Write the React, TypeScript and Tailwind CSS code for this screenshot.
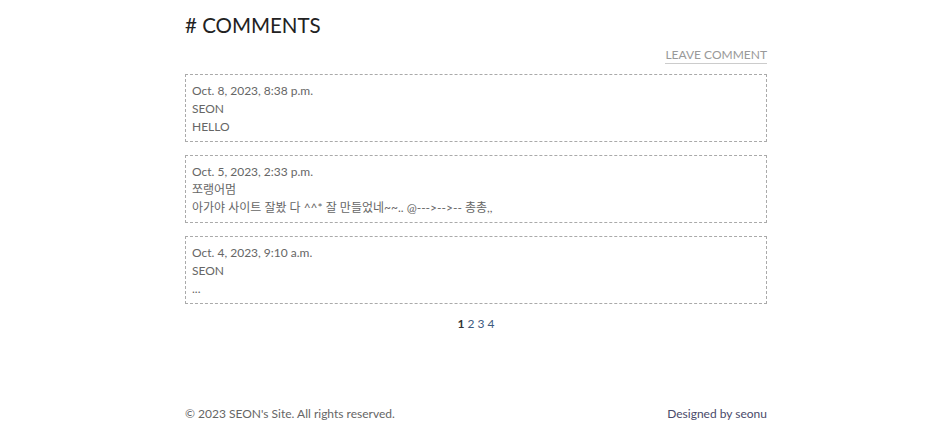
const comments = [
  { date: "Oct. 8, 2023, 8:38 p.m.", author: "SEON", body: "HELLO" },
  {
    date: "Oct. 5, 2023, 2:33 p.m.",
    author: "쪼랭어멈",
    body: "아가야 사이트 잘봤 다 ^^* 잘 만들었네~~.. @--->-->-- 총총,,",
  },
  { date: "Oct. 4, 2023, 9:10 a.m.", author: "SEON", body: "..." },
]

const App = () => {
  return (
    <div
      className="min-h-[431px] bg-white text-[#666] flex flex-col"
      style={{ fontFamily: "Lato, 'Noto Sans CJK KR', sans-serif" }}
    >
      <div className="w-[582px] mx-auto flex flex-col">
        <h1 className="text-[20.5px] leading-none text-[#222] pt-[15px]"># COMMENTS</h1>
        <div className="flex justify-end mt-[11px]">
          <a className="text-[12px] leading-[15px] text-[#999] border-b border-[#ccc] pb-[1px]">
            LEAVE COMMENT
          </a>
        </div>
        <div className="flex flex-col gap-[13px] mt-[10px]">
          {comments.map((c, i) => (
            <div
              key={i}
              className="border border-dashed border-[#aaa] px-[6px] pt-[7px] pb-[5px] text-[12px] leading-[18px]"
            >
              <p>{c.date}</p>
              <p>{c.author}</p>
              <p>{c.body}</p>
            </div>
          ))}
        </div>
        <div className="flex justify-center gap-[3px] mt-[12px] text-[12px] leading-[16px]">
          <span className="text-[#333] font-bold">1</span>
          <a className="text-[#3d5a80]">2</a>
          <a className="text-[#3d5a80]">3</a>
          <a className="text-[#3d5a80]">4</a>
        </div>
      </div>
      <footer className="w-[582px] mx-auto flex justify-between mt-[74px] text-[12px] leading-[16px]">
        <span>© 2023 SEON's Site. All rights reserved.</span>
        <span className="text-[#4a4a6a]">Designed by seonu</span>
      </footer>
    </div>
  )
}

export default App
